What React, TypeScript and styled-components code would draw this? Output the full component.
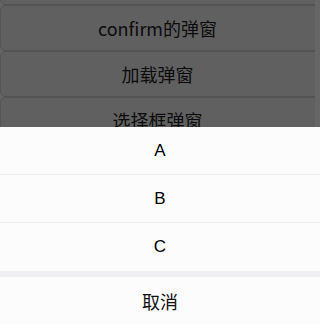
import React from 'react';
import styled, { createGlobalStyle } from 'styled-components';

const GlobalStyle = createGlobalStyle`
  html, body {
    margin: 0;
    padding: 0;
    width: 315px;
    height: 324px;
    overflow: hidden;
    background: #ffffff;
    font-family: "Noto Sans CJK SC", "Liberation Sans", sans-serif;
  }
`;

const demos = ['alert的弹窗', 'confirm的弹窗', '加载弹窗', '选择框弹窗', 'toast提示'];
const options = ['A', 'B', 'C'];

const App = (): JSX.Element => {
  return (
    <>
      <GlobalStyle />
      <DemoList>
        {demos.map((label) => (
          <DemoButton key={label}>{label}</DemoButton>
        ))}
      </DemoList>

      <Mask />

      <ActionSheet>
        <OptionGroup>
          {options.map((opt) => (
            <OptionItem key={opt}>{opt}</OptionItem>
          ))}
        </OptionGroup>
        <CancelItem>取消</CancelItem>
      </ActionSheet>
    </>
  );
};

const DemoList = styled.div`
  display: flex;
  flex-direction: column;
  margin-top: -41px;
  width: calc(100% + 12px);
`;

const DemoButton = styled.button`
  height: 46px;
  border: 1px solid #d2d2d2;
  border-radius: 5px;
  background: #f0f0f0;
  color: #1e1e1e;
  font-family: "Noto Sans CJK SC", sans-serif;
  font-size: 18px;
  padding: 0 12px 0 0;
  margin: 0;
`;

const Mask = styled.div`
  position: fixed;
  inset: 0;
  background: rgba(0, 0, 0, 0.6);
`;

const ActionSheet = styled.div`
  position: fixed;
  left: 0;
  right: 0;
  bottom: 0;
  display: flex;
  flex-direction: column;
  gap: 6px;
  background: #efeff4;
`;

const OptionGroup = styled.div`
  display: flex;
  flex-direction: column;
  background: #fcfcfc;
`;

const OptionItem = styled.div`
  height: 47px;
  display: flex;
  align-items: center;
  justify-content: center;
  color: #000;
  font-family: "Liberation Sans", Arial, sans-serif;
  font-size: 17px;
  border-bottom: 1px solid #ececec;

  &:last-child {
    border-bottom: none;
    height: 48px;
  }
`;

const CancelItem = styled.div`
  height: 47px;
  display: flex;
  align-items: center;
  justify-content: center;
  background: #fcfcfc;
  color: #111;
  font-family: "Noto Sans CJK SC", sans-serif;
  font-size: 18px;
`;

export default App;
